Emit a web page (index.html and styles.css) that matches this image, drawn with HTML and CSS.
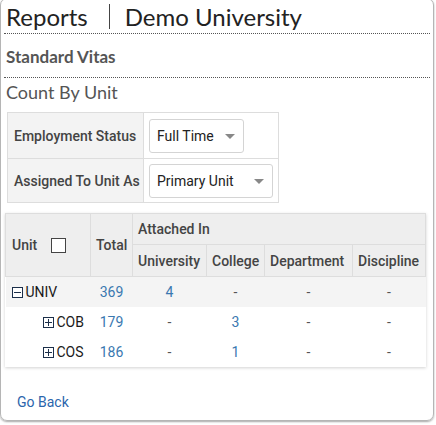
FILE: index.html
```html
<!DOCTYPE html>
<html>
<head>
<meta charset="utf-8">
<link rel="stylesheet" href="styles.css">
</head>
<body>
<div class="card">
  <h1 class="title"><span>Reports</span><span class="sep"></span><span>Demo University</span></h1>
  <h2 class="sub">Standard Vitas</h2>
  <h3 class="sub2">Count By Unit</h3>

  <table class="filters">
    <colgroup>
      <col class="f-label">
      <col class="f-value">
    </colgroup>
    <tr>
      <th>Employment Status</th>
      <td><div class="select s1">Full Time <span class="caret"></span></div></td>
    </tr>
    <tr>
      <th>Assigned To Unit As</th>
      <td><div class="select s2">Primary Unit <span class="caret"></span></div></td>
    </tr>
  </table>

  <table class="data">
    <colgroup>
      <col class="w-unit">
      <col class="w-total">
      <col class="w-u">
      <col class="w-c">
      <col class="w-d">
      <col class="w-di">
    </colgroup>
    <thead>
      <tr>
        <th rowspan="2" class="c-unit">Unit <span class="chk"></span></th>
        <th rowspan="2">Total</th>
        <th colspan="4" class="attached">Attached In</th>
      </tr>
      <tr>
        <th>University</th>
        <th>College</th>
        <th>Department</th>
        <th>Discipline</th>
      </tr>
    </thead>
    <tbody>
      <tr class="top">
        <td class="unit"><span class="tog minus"></span>UNIV</td>
        <td class="num">369</td>
        <td class="num">4</td>
        <td>-</td>
        <td>-</td>
        <td>-</td>
      </tr>
      <tr>
        <td class="unit child"><span class="tog plus"></span>COB</td>
        <td class="num">179</td>
        <td>-</td>
        <td class="num">3</td>
        <td>-</td>
        <td>-</td>
      </tr>
      <tr>
        <td class="unit child"><span class="tog plus"></span>COS</td>
        <td class="num">186</td>
        <td>-</td>
        <td class="num">1</td>
        <td>-</td>
        <td>-</td>
      </tr>
    </tbody>
  </table>

  <a class="back" href="#">Go Back</a>
</div>
</body>
</html>
```
FILE: styles.css
```css
html, body { margin: 0; padding: 0; background: #fff; }
body { width: 436px; height: 425px; overflow: hidden; }
.card {
  box-sizing: border-box;
  width: 434px;
  height: 423px;
  margin-top: -2px;
  border: 1px solid #b5b5b5;
  border-radius: 7px;
  box-shadow: 0 1px 2px rgba(0,0,0,0.35);
  padding: 0 3px 0 3px;
  font-family: "Lato", "Open Sans", sans-serif;
  color: #444;
}
.title {
  margin: 0;
  padding: 4px 0 0 2px;
  box-sizing: border-box;
  height: 35px;
  display: flex;
  align-items: flex-start;
  font-size: 24px;
  font-weight: 400;
  color: #222;
  line-height: 27px;
  border-bottom: 1px dotted #555;
  white-space: nowrap;
}
.sep {
  display: block;
  width: 1px;
  height: 25px;
  background: #444;
  margin: 1px 15px 0 21px;
}
.sub {
  margin: 0;
  padding: 0 0 0 2px;
  height: 43px;
  line-height: 46px;
  font-size: 17px;
  font-weight: 700;
  color: #555;
  border-bottom: 1px dotted #555;
}
.sub2 {
  margin: 0;
  padding: 0 0 0 2px;
  height: 31px;
  line-height: 29px;
  font-size: 18px;
  font-weight: 400;
  color: #555;
}
.filters {
  margin: 3px 0 0 3px;
  border-collapse: collapse;
  table-layout: fixed;
  font-family: "Roboto", sans-serif;
  font-size: 14px;
  width: 271px;
  border: 1px solid #ddd;
}
.f-label { width: 136px; }
.f-value { width: 135px; }
.filters th {
  background: #f3f3f3;
  color: #444;
  text-align: left;
  font-weight: 500;
  padding: 0 0 0 6px;
  border-right: 1px solid #ddd;
  white-space: nowrap;
}
.filters tr:first-child th, .filters tr:first-child td { height: 45px; border-bottom: 1px solid #ddd; }
.filters tr:last-child th, .filters tr:last-child td { height: 43px; }
.filters td { padding: 0 0 0 5px; }
.select {
  box-sizing: border-box;
  position: relative;
  height: 34px;
  border: 1px solid #d4d4d4;
  border-radius: 3px;
  font-size: 14px;
  color: #222;
  line-height: 32px;
  padding-left: 7px;
  background: #fff;
}
.s1 { width: 95px; }
.s2 { width: 124px; }
.caret {
  position: absolute;
  right: 8px;
  top: 14px;
  border-left: 5px solid transparent;
  border-right: 5px solid transparent;
  border-top: 5px solid #888;
}
.data {
  margin: 10px 0 0 1px;
  border-collapse: collapse;
  table-layout: fixed;
  width: 420px;
  font-family: "Roboto", sans-serif;
  font-size: 14px;
  box-shadow: 0 1px 3px rgba(0,0,0,0.18);
}
.w-unit { width: 85px; }
.w-total { width: 42px; }
.w-u { width: 74px; }
.w-c { width: 58px; }
.w-d { width: 88px; }
.w-di { width: 73px; }
.data thead th {
  background: #eee;
  color: #444;
  font-weight: 500;
  text-align: left;
  padding: 0 5px;
  border: 1px solid #ddd;
  white-space: nowrap;
  overflow: hidden;
}
.data thead tr:first-child th { height: 30px; }
.data thead tr:last-child th { height: 31px; }
.c-unit { padding-left: 6px !important; }
.chk {
  display: inline-block;
  box-sizing: border-box;
  width: 15px;
  height: 15px;
  border: 1px solid #444;
  background: #fff;
  vertical-align: -3px;
  margin-left: 10px;
}
.data tbody td {
  height: 30px;
  padding: 0;
  color: #555;
  text-align: center;
}
.data tbody tr.top td { background: #f4f4f4; }
.data tbody td.num { color: #3a78b0; }
.data tbody td.unit {
  color: #1a1a1a;
  text-align: left;
  white-space: nowrap;
  padding-left: 6px;
}
.data tbody td.unit.child { padding-left: 37px; }
.tog {
  display: inline-block;
  position: relative;
  box-sizing: border-box;
  width: 11px;
  height: 11px;
  border: 1px solid #1c2f4a;
  margin-right: 3px;
  vertical-align: -1px;
  background: #fff;
}
.tog::before {
  content: "";
  position: absolute;
  left: 1px; right: 1px; top: 4px;
  height: 1px;
  background: #1c2f4a;
}
.tog.plus::after {
  content: "";
  position: absolute;
  top: 1px; bottom: 1px; left: 4px;
  width: 1px;
  background: #1c2f4a;
}
.back {
  display: inline-block;
  margin: 27px 0 0 13px;
  font-family: "Roboto", sans-serif;
  font-size: 14px;
  color: #2b65ac;
  text-decoration: none;
}
```
